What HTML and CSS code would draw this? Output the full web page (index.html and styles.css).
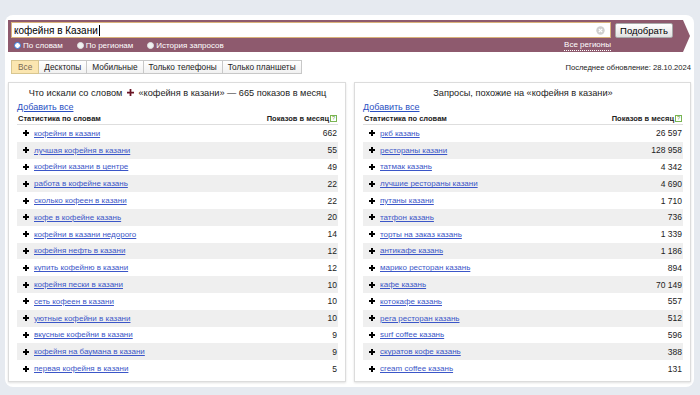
FILE: index.html
```html
<!DOCTYPE html>
<html lang="ru">
<head>
<meta charset="utf-8">
<link rel="stylesheet" href="styles.css">
</head>
<body>
<div class="card">
  <div class="searchbar">
    <div class="search-col">
      <div class="input">
        <span class="input-text">кофейня в Казани</span><span class="caret"></span>
        <svg class="clear" width="9" height="9" viewBox="0 0 9 9"><circle cx="4.5" cy="4.5" r="4.2" fill="#cfcfcf"/><path d="M2.8 2.8L6.2 6.2M6.2 2.8L2.8 6.2" stroke="#fff" stroke-width="1.2"/></svg>
      </div>
      <div class="radios">
        <label class="radio"><span class="dot on"></span>По словам</label>
        <label class="radio"><span class="dot"></span>По регионам</label>
        <label class="radio"><span class="dot"></span>История запросов</label>
        <span class="regions">Все регионы</span>
      </div>
    </div>
    <button class="btn">Подобрать</button>
  </div>

  <div class="toolbar">
    <div class="tabs">
      <span class="tab active">Все</span><span class="tab">Десктопы</span><span class="tab">Мобильные</span><span class="tab">Только телефоны</span><span class="tab">Только планшеты</span>
    </div>
    <div class="updated">Последнее обновление: 28.10.2024</div>
  </div>

  <div class="panels">
    <div class="panel">
      <div class="title">Что искали со словом <svg class="tplus" width="7" height="7" viewBox="0 0 8 8"><path d="M3 0h2v3h3v2H5v3H3V5H0V3h3z" fill="#6a1424"/></svg> «кофейня в казани» — 665 показов в месяц</div>
      <a class="addall">Добавить все</a>
      <div class="head"><span>Статистика по словам</span><span>Показов в месяц<span class="q">?</span></span></div>
      <div class="rows">
        <div class="row"><i class="plus"></i><a>кофейни в казани</a><span class="num">662</span></div>
        <div class="row"><i class="plus"></i><a>лучшая кофейня в казани</a><span class="num">55</span></div>
        <div class="row"><i class="plus"></i><a>кофейни казани в центре</a><span class="num">49</span></div>
        <div class="row"><i class="plus"></i><a>работа в кофейне казань</a><span class="num">22</span></div>
        <div class="row"><i class="plus"></i><a>сколько кофеен в казани</a><span class="num">22</span></div>
        <div class="row"><i class="plus"></i><a>кофе в кофейне казань</a><span class="num">20</span></div>
        <div class="row"><i class="plus"></i><a>кофейни в казани недорого</a><span class="num">14</span></div>
        <div class="row"><i class="plus"></i><a>кофейня нефть в казани</a><span class="num">12</span></div>
        <div class="row"><i class="plus"></i><a>купить кофейню в казани</a><span class="num">12</span></div>
        <div class="row"><i class="plus"></i><a>кофейня пески в казани</a><span class="num">10</span></div>
        <div class="row"><i class="plus"></i><a>сеть кофеен в казани</a><span class="num">10</span></div>
        <div class="row"><i class="plus"></i><a>уютные кофейни в казани</a><span class="num">10</span></div>
        <div class="row"><i class="plus"></i><a>вкусные кофейни в казани</a><span class="num">9</span></div>
        <div class="row"><i class="plus"></i><a>кофейня на баумана в казани</a><span class="num">9</span></div>
        <div class="row"><i class="plus"></i><a>первая кофейня в казани</a><span class="num">5</span></div>
      </div>
    </div>
    <div class="panel">
      <div class="title">Запросы, похожие на «кофейня в казани»</div>
      <a class="addall">Добавить все</a>
      <div class="head"><span>Статистика по словам</span><span>Показов в месяц<span class="q">?</span></span></div>
      <div class="rows">
        <div class="row"><i class="plus"></i><a>ркб казань</a><span class="num">26 597</span></div>
        <div class="row"><i class="plus"></i><a>рестораны казани</a><span class="num">128 958</span></div>
        <div class="row"><i class="plus"></i><a>татмак казань</a><span class="num">4 342</span></div>
        <div class="row"><i class="plus"></i><a>лучшие рестораны казани</a><span class="num">4 690</span></div>
        <div class="row"><i class="plus"></i><a>путаны казани</a><span class="num">1 710</span></div>
        <div class="row"><i class="plus"></i><a>татфон казань</a><span class="num">736</span></div>
        <div class="row"><i class="plus"></i><a>торты на заказ казань</a><span class="num">1 339</span></div>
        <div class="row"><i class="plus"></i><a>антикафе казань</a><span class="num">1 186</span></div>
        <div class="row"><i class="plus"></i><a>марико ресторан казань</a><span class="num">894</span></div>
        <div class="row"><i class="plus"></i><a>кафе казань</a><span class="num">70 149</span></div>
        <div class="row"><i class="plus"></i><a>котокафе казань</a><span class="num">557</span></div>
        <div class="row"><i class="plus"></i><a>рега ресторан казань</a><span class="num">512</span></div>
        <div class="row"><i class="plus"></i><a>surf coffee казань</a><span class="num">596</span></div>
        <div class="row"><i class="plus"></i><a>скуратов кофе казань</a><span class="num">388</span></div>
        <div class="row"><i class="plus"></i><a>cream coffee казань</a><span class="num">131</span></div>
      </div>
    </div>
  </div>
</div>
</body>
</html>
```

FILE: styles.css
```css
* { box-sizing: border-box; }
html, body { margin: 0; padding: 0; }
body {
  background: #e6eaf0;
  font-family: "Liberation Sans", Arial, sans-serif;
  color: #000;
  width: 700px;
  height: 395px;
  overflow: hidden;
}
.card {
  margin: 15px 6px 0 5px;
  height: 372px;
  background: #fff;
  border-radius: 8px;
  padding: 5px 3px 0 3px;
}
.searchbar {
  display: flex;
  align-items: flex-start;
  gap: 4px;
  width: 682px;
  height: 32px;
  background: #8e5a6e;
  padding: 2px 0 0 3px;
  clip-path: polygon(0 0, calc(100% - 7px) 0, 100% 50%, calc(100% - 7px) 100%, 0 100%);
}
.search-col { width: 600px; display: flex; flex-direction: column; }
.input {
  height: 16px;
  background: #fff;
  border: 1px solid #d9b27a;
  display: flex;
  align-items: center;
  padding: 0 3px 0 2px;
  font-size: 10px;
}
.caret { width: 1px; height: 11px; background: #000; margin-left: 1px; }
.clear { margin-left: auto; margin-right: 2px; }
.radios {
  height: 14px;
  display: flex;
  align-items: center;
  color: #fff;
  font-size: 8px;
  padding-left: 3px;
}
.radio { display: flex; align-items: center; gap: 2px; margin-right: 14px; }
.dot { width: 7px; height: 7px; border-radius: 50%; background: #f2f2f2; border: 1px solid #e0e0e0; }
.dot.on { background: #fff; border: 1.5px solid #2f7fe0; }
.regions {
  margin-left: auto;
  border-bottom: 1px dotted #fff;
  line-height: 10px;
}
.btn {
  width: 58px;
  height: 15px;
  margin-top: 1px;
  padding: 0;
  font-family: "Liberation Sans", Arial, sans-serif;
  font-size: 9.5px;
  color: #000;
  border: 1px solid #a9a9a9;
  border-radius: 2px;
  background: linear-gradient(#ffffff, #e2e2e2);
}
.toolbar {
  display: flex;
  align-items: center;
  justify-content: space-between;
  margin-top: 8px;
  padding-left: 3px;
}
.tabs { display: flex; }
.tab {
  height: 14px;
  line-height: 12px;
  font-size: 8.3px;
  padding: 0 5px;
  border: 1px solid #c8c8c8;
  border-left: none;
  background: linear-gradient(#ffffff, #f1f1f1);
  color: #222;
}
.tab:first-child { border-left: 1px solid #c8c8c8; padding: 0 6px; }
.tab.active { background: #fbe6b0; color: #7a6a55; border-color: #d8c690; }
.updated { font-size: 7.6px; color: #222; margin-right: 0; }
.panels {
  display: flex;
  gap: 8px;
  margin-top: 8px;
}
.panel {
  width: 338px;
  height: 300px;
  border: 1px solid #dcdcdc;
  box-shadow: 0 1px 2px rgba(0,0,0,0.12);
  padding: 3px 7px 0 8px;
  font-size: 8px;
}
.panel + .panel { width: 337px; }
.title {
  text-align: center;
  font-size: 9.2px;
  line-height: 14px;
  color: #222;
  white-space: nowrap;
}
.tplus { margin: 0 2px; vertical-align: 0; }
.addall {
  display: block;
  width: max-content;
  margin-top: 1px;
  font-size: 9px;
  line-height: 12px;
  color: #2a4fc2;
  text-decoration: underline;
}
.head {
  display: flex;
  justify-content: space-between;
  align-items: center;
  font-size: 7.5px;
  font-weight: bold;
  color: #222;
  height: 12px;
  border-bottom: 1px solid #dedede;
  padding: 0 1px 1px 1px;
}
.q {
  display: inline-block;
  width: 7px;
  height: 7px;
  margin-left: 1px;
  border: 1px solid #7ab552;
  color: #5d9a35;
  font-size: 5.5px;
  line-height: 5px;
  text-align: center;
  vertical-align: middle;
  font-weight: normal;
}
.row {
  height: 16.8px;
  display: flex;
  align-items: center;
  font-size: 8px;
  padding: 0 1px 0 6px;
}
.row:nth-child(even) { background: #efefef; }
.row a { color: #3b56c8; text-decoration: underline; margin-left: 5px; }
.row .num { margin-left: auto; color: #222; font-size: 8.5px; }
.plus {
  position: relative;
  display: inline-block;
  width: 6px;
  height: 6px;
}
.plus::before, .plus::after {
  content: "";
  position: absolute;
  background: #000;
}
.plus::before { left: 2px; top: 0; width: 2px; height: 6px; }
.plus::after { left: 0; top: 2px; width: 6px; height: 2px; }
```
